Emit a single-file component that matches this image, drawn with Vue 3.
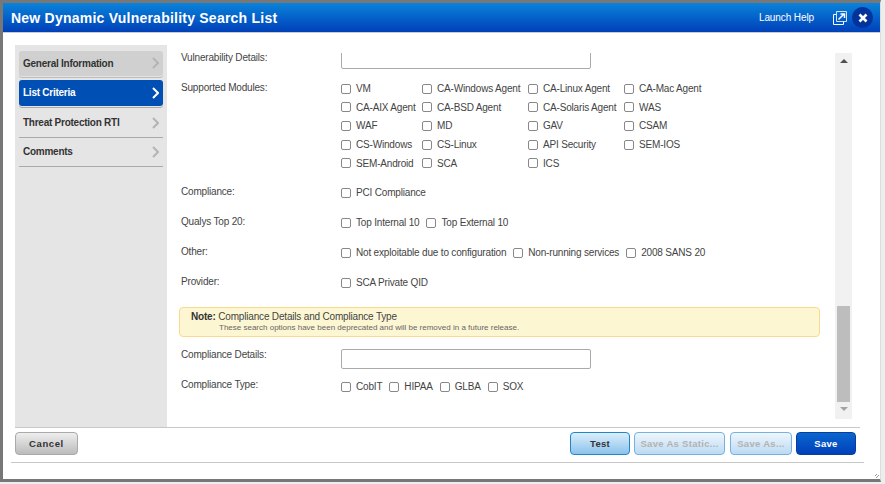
<template>
  <div class="page">
    <div class="dialog">
      <header class="head">
        <h1>New Dynamic Vulnerability Search List</h1>
        <a class="help">Launch Help</a>
        <svg class="popout" width="14" height="14" viewBox="0 0 14 14">
          <path d="M3.5 .5h10v10h-10z" fill="none" stroke="#cfe3fa" />
          <path d="M.5 3.500h2.500M.5 3.500v10h10v-2.500" fill="none" stroke="#fff" />
          <path d="M5.500 8.500l5-5M7.500 3h4v4" fill="none" stroke="#fff" stroke-width="1.500" />
        </svg>
        <button class="close">
          <svg width="10" height="10" viewBox="0 0 10 10">
            <path d="M1.500 1.500l7 7M8.500 1.500l-7 7" stroke="#fff" stroke-width="2.600" />
          </svg>
        </button>
      </header>

      <div class="body">
        <nav class="steps">
          <a
            v-for="s in steps"
            :key="s.name"
            class="step"
            :class="s.cls"
          >
            <span>{{ s.name }}</span>
            <svg width="7" height="12" viewBox="0 0 7 12">
              <path d="M1 1l5 5-5 5" fill="none" stroke-width="2" />
            </svg>
          </a>
        </nav>

        <div class="scroller">
          <div class="form">
            <div class="row row-first">
              <label>Vulnerability Details:</label>
              <input class="text" type="text" />
            </div>

            <div class="row row-modules">
              <label>Supported Modules:</label>
              <div class="modules">
                <span v-for="m in modules" :key="m" class="check">
                  <input type="checkbox" />{{ m }}
                </span>
              </div>
            </div>

            <div v-for="r in optionRows" :key="r.label" class="row row-opts">
              <label>{{ r.label }}</label>
              <div class="opts">
                <span v-for="o in r.options" :key="o" class="check">
                  <input type="checkbox" />{{ o }}
                </span>
              </div>
            </div>

            <div class="note">
              <div><b>Note:</b> Compliance Details and Compliance Type</div>
              <small>These search options have been deprecated and will be removed in a future release.</small>
            </div>

            <div class="row row-details">
              <label>Compliance Details:</label>
              <input class="text" type="text" />
            </div>

            <div class="row row-opts row-type">
              <label>Compliance Type:</label>
              <div class="opts">
                <span v-for="o in complianceTypes" :key="o" class="check">
                  <input type="checkbox" />{{ o }}
                </span>
              </div>
            </div>
          </div>

          <div class="scrollbar">
            <i class="arrow up"></i>
            <div class="track"><div class="thumb"></div></div>
            <i class="arrow down"></i>
          </div>
        </div>
      </div>

      <footer class="foot">
        <button class="btn cancel">Cancel</button>
        <div class="right">
          <button class="btn light test">Test</button>
          <button class="btn light off static">Save As Static...</button>
          <button class="btn light off saveas">Save As...</button>
          <button class="btn primary">Save</button>
        </div>
      </footer>
      <div class="grip"></div>
    </div>
  </div>
</template>

<script setup>
const steps = [
  { name: 'General Information', cls: 'done' },
  { name: 'List Criteria', cls: 'active' },
  { name: 'Threat Protection RTI', cls: 'threat' },
  { name: 'Comments', cls: 'last' },
]

const modules = [
  'VM', 'CA-Windows Agent', 'CA-Linux Agent', 'CA-Mac Agent',
  'CA-AIX Agent', 'CA-BSD Agent', 'CA-Solaris Agent', 'WAS',
  'WAF', 'MD', 'GAV', 'CSAM',
  'CS-Windows', 'CS-Linux', 'API Security', 'SEM-IOS',
  'SEM-Android', 'SCA', 'ICS',
]

const optionRows = [
  { label: 'Compliance:', options: ['PCI Compliance'] },
  { label: 'Qualys Top 20:', options: ['Top Internal 10', 'Top External 10'] },
  { label: 'Other:', options: ['Not exploitable due to configuration', 'Non-running services', '2008 SANS 20'] },
  { label: 'Provider:', options: ['SCA Private QID'] },
]

const complianceTypes = ['CobIT', 'HIPAA', 'GLBA', 'SOX']
</script>

<style>
html, body { margin: 0; background: #eceded; }
</style>

<style scoped>
.page {
  width: 885px;
  height: 484px;
  overflow: hidden;
  font-family: "Liberation Sans", Arial, sans-serif;
  font-size: 10px;
  letter-spacing: -.18px;
  color: #444;
}
.dialog {
  position: relative;
  box-sizing: border-box;
  width: 881px;
  height: 482px;
  background: #fff;
  border: 3px solid #777;
  border-right: 1px solid #ddd;
  display: flex;
  flex-direction: column;
}
.head {
  height: 29px;
  flex: none;
  display: flex;
  align-items: center;
  background: linear-gradient(#0a83da, #0040b9);
  border-bottom: 1px solid #ccc;
  color: #fff;
  padding: 0 7px 0 8px;
}
.head h1 {
  margin: 0;
  flex: 1;
  font-size: 14px;
  font-weight: 700;
  letter-spacing: .23px;
}
.help { font-size: 10px; letter-spacing: -.1px; margin-right: 19px; }
.popout { margin-right: 5px; }
.close {
  width: 21px;
  height: 21px;
  padding: 0;
  border: 0;
  border-radius: 50%;
  background: #02329c;
  display: flex;
  align-items: center;
  justify-content: center;
}

.body {
  flex: none;
  height: 382px;
  margin: 12px 20px 0 12px;
  display: flex;
  border-bottom: 1px solid #c8c8c8;
}
.steps {
  width: 152px;
  flex: none;
  box-sizing: border-box;
  padding: 6px 4px 0;
  background: #e5e5e5;
}
.step {
  box-sizing: border-box;
  height: 29px;
  display: flex;
  align-items: center;
  justify-content: space-between;
  padding: 0 4px;
  border-bottom: 1px solid #aaa;
  font-weight: 700;
  letter-spacing: -.25px;
  color: #333;
}
.step svg { stroke: #b4b4b4; }
.step.threat { height: 30px; }
.step.last span { margin-bottom: 2px; }
.step.done {
  height: 25px;
  margin-bottom: 4px;
  padding-bottom: 1px;
  background: #d0d0d0;
  border: 0;
  border-radius: 3px;
  box-shadow: 0 1px 0 #e5e5e5, 0 2px 0 #bbb;
}
.step.active {
  height: 26px;
  margin-bottom: 2px;
  padding-bottom: 1px;
  background: #004fb4;
  border: 0;
  border-radius: 3px;
  box-shadow: 0 1px 0 #e5e5e5, 0 2px 0 #aaa;
  color: #fff;
}
.step.active svg { stroke: #fff; }

.scroller {
  flex: 1;
  min-width: 0;
  height: 366px;
  margin: 8px 8px 0 0;
  display: flex;
  overflow: hidden;
}
.form {
  flex: 1;
  min-width: 0;
  padding: 0 15px 0 12px;
}
.row {
  display: grid;
  grid-template-columns: 160px 1fr;
  padding-left: 2px;
}
.row label { line-height: 12px; }
.text {
  box-sizing: border-box;
  width: 250px;
  height: 20px;
  margin: 0;
  background: #fff;
  border: 1px solid #aaa;
  border-radius: 2px;
}
.row-first { margin-top: -4px; height: 33px; }
.row-first label { padding-top: 3px; }
.row-modules { height: 103px; }
.modules {
  display: grid;
  grid-template-columns: 81px 106px 96px 1fr;
  grid-auto-rows: 18.700px;
  margin-top: -1px;
}
.check {
  display: flex;
  align-items: center;
  height: 13px;
  margin-top: 1px;
  white-space: nowrap;
}
.check input {
  appearance: none;
  box-sizing: border-box;
  width: 10px;
  height: 10px;
  margin: 0 5px 0 0;
  background: #fff;
  border: 1px solid #888;
  border-radius: 2px;
  flex: none;
}
.row-opts { height: 30px; }
.row-opts label { padding-top: 1px; }
.opts { display: flex; gap: 7px; }
.row-type { margin-top: -1px; }
.row-type label { padding-top: 0; }
.note {
  box-sizing: border-box;
  height: 30px;
  margin-top: 2px;
  padding: 3px 11px;
  background: #fdf6d3;
  border: 1px solid #fbd98f;
  border-radius: 4px;
  line-height: 11px;
}
.note b { color: #333; }
.note small {
  display: block;
  margin-top: 1px;
  padding-left: 28px;
  font-size: 8px;
  letter-spacing: 0;
  line-height: 10px;
  color: #666;
}
.row-details { height: 31px; margin-top: 12px; }

.scrollbar {
  width: 17px;
  flex: none;
  background: #f1f1f1;
  display: flex;
  flex-direction: column;
  align-items: center;
}
.track { flex: 1; width: 13px; position: relative; }
.thumb {
  position: absolute;
  left: 0;
  right: 0;
  bottom: 0;
  height: 96px;
  background: #bdbdbd;
}
.arrow { width: 0; height: 0; flex: none; border: 4px solid transparent; }
.arrow.up { margin-top: 6px; border-top: 0; border-bottom: 4px solid #505050; margin-bottom: 7px; }
.arrow.down { margin: 5px 0 8px; border-bottom: 0; border-top: 4px solid #a3a3a3; }

.foot {
  flex: none;
  height: 35px;
  margin: 0 16px 0 8px;
  padding: 4px 8px 0 4px;
  box-sizing: border-box;
  display: flex;
  justify-content: space-between;
  border-bottom: 1px solid #c8c8c8;
}
.right { display: flex; gap: 4px; }
.btn {
  box-sizing: border-box;
  height: 23px;
  padding: 0;
  font-family: inherit;
  font-size: 9.500px;
  font-weight: 700;
  letter-spacing: .3px;
  border-radius: 4px;
  color: #333;
}
.cancel {
  width: 63px;
  background: linear-gradient(#eee, #bbb);
  border: 1px solid #aaa;
  letter-spacing: .6px;
}
.light {
  background: linear-gradient(#eef6fd, #bcdaf2);
  border: 1px solid #76b2df;
}
.test { width: 60px; border-color: #1f86c9; background: linear-gradient(#dbeefb, #8cc2ec); }
.off { color: #b2b2b2; }
.static { width: 91px; }
.saveas { width: 62px; margin-left: 1px; }
.primary {
  width: 60px;
  background: linear-gradient(#0a66cf, #0040b9);
  border: 1px solid #0a3e9c;
  color: #fff;
}
.grip {
  position: absolute;
  right: 1px;
  bottom: 1px;
  width: 4px;
  height: 4px;
  background: repeating-linear-gradient(135deg, #fff 0 1px, #999 1px 2px);
}
</style>
